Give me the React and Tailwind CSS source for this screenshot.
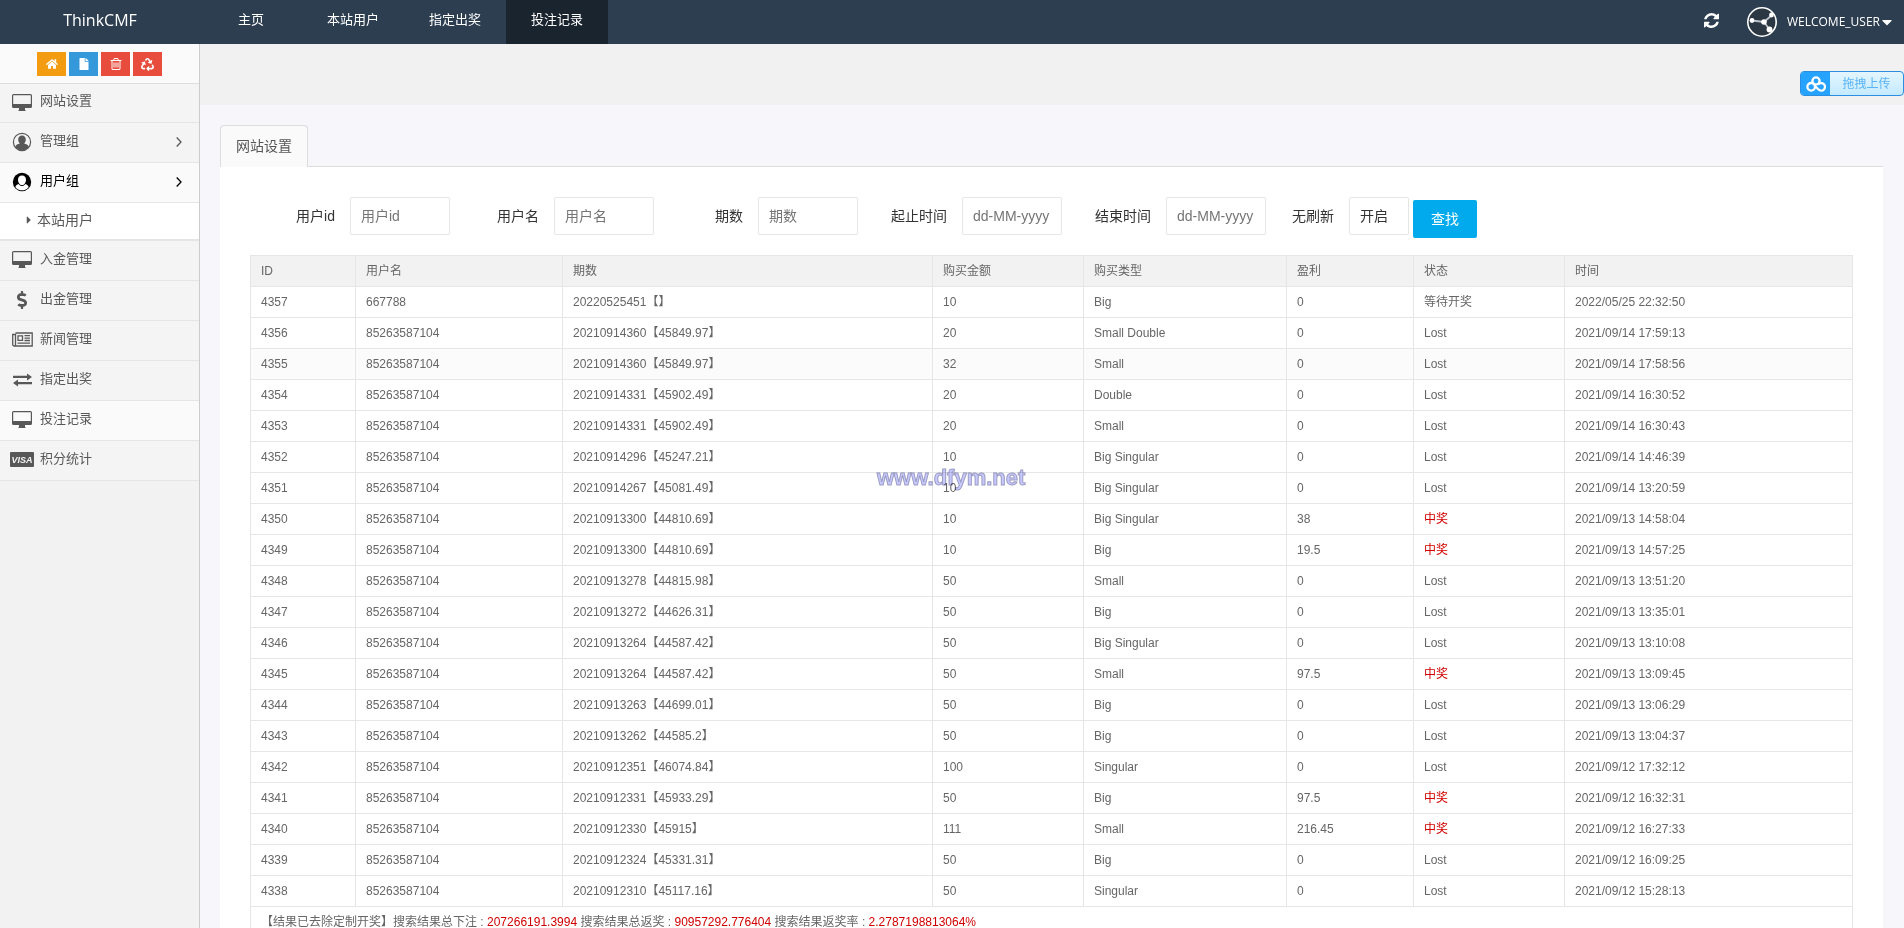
import { FaHome, FaFile, FaRecycle, FaDollarSign, FaCaretDown, FaCaretRight } from 'react-icons/fa';

const sans = "font-['Liberation_Sans','Noto_Sans_CJK_SC',sans-serif]";

const Monitor = () => (
  <svg viewBox="0 0 20 17" className="h-[17px] w-5" fill="currentColor">
    <path fillRule="evenodd" d="M1.500 0h17A1.500 1.500 0 0 1 20 1.500v11a1.500 1.500 0 0 1-1.500 1.500H13v2h.5v1h-7v-1H7v-2H1.500A1.500 1.500 0 0 1 0 12.500v-11A1.500 1.500 0 0 1 1.500 0ZM1.200 1.300V10h17.600V1.300Z" />
  </svg>
);

const AdminFace = () => (
  <svg viewBox="0 0 20 20" className="h-5 w-5">
    <circle cx="10" cy="10" r="8.600" fill="none" stroke="currentColor" strokeWidth="1.200" />
    <path fill="currentColor" d="M10 3.600c2.500 0 3.800 1.700 3.800 4 0 1.700-.7 3.200-1.700 4 2.300.3 3.900 1.500 4.700 3.400a8.300 8.300 0 0 1-13.600 0c.8-1.900 2.400-3.100 4.700-3.400-1-.8-1.700-2.300-1.700-4 0-2.300 1.300-4 3.800-4Z" />
  </svg>
);

const UserFace = () => (
  <svg viewBox="0 0 20 20" className="h-5 w-5">
    <circle cx="10" cy="10" r="9.200" fill="currentColor" />
    <path fill="#fff" d="M10 3.500c2.700 0 4 1.900 4 4.300 0 1.600-.6 3-1.500 3.900 2 .4 3.500 1.500 4.200 3.200a8.200 8.200 0 0 1-13.400 0c.7-1.700 2.200-2.800 4.200-3.200C6.600 10.800 6 9.400 6 7.800c0-2.400 1.300-4.300 4-4.300Z" />
    <path fill="none" stroke="currentColor" strokeWidth="1" d="M6.500 11.600c1 1.300 2.200 2 3.500 2s2.500-.7 3.500-2" />
  </svg>
);

const News = () => (
  <svg viewBox="0 0 21 15" className="h-[15px] w-[21px]" fill="none" stroke="currentColor" strokeWidth="1.300">
    <path d="M3.500 1h16.700v13H2.200A1.500 1.500 0 0 1 .7 12.500V2.500h2.800v10a1.300 1.300 0 0 1-1.300 1.500" />
    <path d="M6 3.800h4.500v4.500H6zM12.500 3.700h5.500M12.500 6.100h5.500M12.500 8.500h5.500M5.500 11.200h12.500" />
  </svg>
);

const Exchange = () => (
  <svg viewBox="0 0 19 14" className="h-3.5 w-[19px]" fill="currentColor">
    <path d="M0 2.700h14V.5l5 3.500-5 3.500V5H0ZM19 11.300H5v2.200L0 10l5-3.500V9h14Z" />
  </svg>
);

const Visa = () => (
  <svg viewBox="0 0 24 15" className="h-[15px] w-6 shrink-0">
    <rect width="24" height="15" rx="1" fill="currentColor" />
    <text x="12" y="11" textAnchor="middle" fontFamily="Liberation Sans" fontSize="9" fontWeight="bold" fontStyle="italic" fill="#f4f4f4">VISA</text>
  </svg>
);

const Trash = ({ className }) => (
  <svg viewBox="0 0 1408 1536" className={className} fill="currentColor">
    <path d="M512 608v576q0 14-9 23t-23 9h-64q-14 0-23-9t-9-23V608q0-14 9-23t23-9h64q14 0 23 9t9 23zm256 0v576q0 14-9 23t-23 9h-64q-14 0-23-9t-9-23V608q0-14 9-23t23-9h64q14 0 23 9t9 23zm256 0v576q0 14-9 23t-23 9h-64q-14 0-23-9t-9-23V608q0-14 9-23t23-9h64q14 0 23 9t9 23zm128 724V384H256v948q0 22 7 40.500t14.500 27 10.500 8.500h832q3 0 10.500-8.500t14.500-27 7-40.500zM480 256h448l-48-117q-7-9-17-11H546q-10 2-17 11zm928 32v64q0 14-9 23t-23 9h-96v948q0 83-47 143.500t-113 60.500H288q-66 0-113-58.500T128 1336V384H32q-14 0-23-9t-9-23v-64q0-14 9-23t23-9h309l70-167q15-37 54-63t79-26h320q40 0 79 26t54 63l70 167h309q14 0 23 9t9 23z" />
  </svg>
);

const Chevron = () => (
  <svg viewBox="0 0 6 10" className="h-2.5 w-1.5" fill="none" stroke="currentColor" strokeWidth="1.300">
    <path d="M.7.500 5 5 .7 9.500" />
  </svg>
);

const Dollar = () => <FaDollarSign className="h-[18px] w-[14px]" />;

const Refresh = () => (
  <svg viewBox="0 0 1536 1536" className="h-[15px] w-[15px]" fill="currentColor">
    <path d="M1511 928q0 5-1 7-64 268-268 434.500T764 1536q-146 0-282.500-55T238 1324l-129 129q-19 19-45 19t-45-19-19-45V960q0-26 19-45t45-19h448q26 0 45 19t19 45-19 45l-137 137q71 66 161 102t187 36q134 0 250-65t186-179q11-17 53-117 8-23 30-23h192q13 0 22.500 9.500t9.500 22.500zm25-800v448q0 26-19 45t-45 19h-448q-26 0-45-19t-19-45 19-45l138-138Q969 256 768 256q-134 0-250 65T332 500q-11 17-53 117-8 23-30 23H50q-13 0-22.500-9.500T18 608v-7q65-268 270-434.500T768 0q146 0 284 55.500T1297 212l130-129q19-19 45-19t45 19 19 45z" />
  </svg>
);

const Avatar = () => (
  <svg viewBox="0 0 30 30" className="h-[30px] w-[30px]">
    <circle cx="15" cy="15" r="14.200" fill="#2b3743" stroke="#fff" strokeWidth="1.600" />
    <path d="M5 13.500 17 15l8-7M17 15l5.500 7.500" fill="none" stroke="#bcc3c9" strokeWidth="1.800" />
    <g fill="#fff">
      <circle cx="5" cy="13.500" r="2.400" />
      <circle cx="17" cy="15" r="2.800" />
      <circle cx="24.500" cy="8" r="2.400" />
      <circle cx="22.500" cy="22.500" r="2.900" />
    </g>
  </svg>
);

const Cloud = () => (
  <svg viewBox="0 0 20 16" className="h-4 w-5" fill="none" stroke="#fff" strokeWidth="2.300">
    <circle cx="10" cy="5" r="3.600" />
    <circle cx="5.200" cy="10.800" r="3.800" />
    <path d="M12.200 8.500a3.800 3.800 0 1 1 .3 5L8.500 9.500" />
  </svg>
);

const nav = [
  { label: '主页' },
  { label: '本站用户' },
  { label: '指定出奖' },
  { label: '投注记录', active: true },
];

const tools = [
  { label: '首页', Icon: FaHome, color: 'bg-[#f39c12]', size: 'h-3 w-3' },
  { label: '文件', Icon: FaFile, color: 'bg-[#3498db]', size: 'h-3 w-3' },
  { label: '删除', Icon: Trash, color: 'bg-[#e74c3c]', size: 'h-3 w-3' },
  { label: '回收', Icon: FaRecycle, color: 'bg-[#e74c3c]', size: 'h-[13px] w-[13px]' },
];

const menu = [
  { label: '网站设置', Icon: Monitor },
  { label: '管理组', Icon: AdminFace, more: true },
  { label: '用户组', Icon: UserFace, more: true, open: true, sub: '本站用户' },
  { label: '入金管理', Icon: Monitor },
  { label: '出金管理', Icon: Dollar },
  { label: '新闻管理', Icon: News },
  { label: '指定出奖', Icon: Exchange },
  { label: '投注记录', Icon: Monitor, hover: true },
  { label: '积分统计', Icon: Visa },
];

const fields = [
  { id: 'uid', label: '用户id', hint: '用户id' },
  { id: 'uname', label: '用户名', hint: '用户名' },
  { id: 'issue', label: '期数', hint: '期数' },
  { id: 'start', label: '起止时间', hint: 'dd-MM-yyyy' },
  { id: 'end', label: '结束时间', hint: 'dd-MM-yyyy' },
];

const headers = ['ID', '用户名', '期数', '购买金额', '购买类型', '盈利', '状态', '时间'];

const U = '85263587104';
const rows = [
  ['4357', '667788', '20220525451【】', '10', 'Big', '0', '等待开奖', '2022/05/25 22:32:50'],
  ['4356', U, '20210914360【45849.97】', '20', 'Small Double', '0', 'Lost', '2021/09/14 17:59:13'],
  ['4355', U, '20210914360【45849.97】', '32', 'Small', '0', 'Lost', '2021/09/14 17:58:56'],
  ['4354', U, '20210914331【45902.49】', '20', 'Double', '0', 'Lost', '2021/09/14 16:30:52'],
  ['4353', U, '20210914331【45902.49】', '20', 'Small', '0', 'Lost', '2021/09/14 16:30:43'],
  ['4352', U, '20210914296【45247.21】', '10', 'Big Singular', '0', 'Lost', '2021/09/14 14:46:39'],
  ['4351', U, '20210914267【45081.49】', '10', 'Big Singular', '0', 'Lost', '2021/09/14 13:20:59'],
  ['4350', U, '20210913300【44810.69】', '10', 'Big Singular', '38', '中奖', '2021/09/13 14:58:04'],
  ['4349', U, '20210913300【44810.69】', '10', 'Big', '19.5', '中奖', '2021/09/13 14:57:25'],
  ['4348', U, '20210913278【44815.98】', '50', 'Small', '0', 'Lost', '2021/09/13 13:51:20'],
  ['4347', U, '20210913272【44626.31】', '50', 'Big', '0', 'Lost', '2021/09/13 13:35:01'],
  ['4346', U, '20210913264【44587.42】', '50', 'Big Singular', '0', 'Lost', '2021/09/13 13:10:08'],
  ['4345', U, '20210913264【44587.42】', '50', 'Small', '97.5', '中奖', '2021/09/13 13:09:45'],
  ['4344', U, '20210913263【44699.01】', '50', 'Big', '0', 'Lost', '2021/09/13 13:06:29'],
  ['4343', U, '20210913262【44585.2】', '50', 'Big', '0', 'Lost', '2021/09/13 13:04:37'],
  ['4342', U, '20210912351【46074.84】', '100', 'Singular', '0', 'Lost', '2021/09/12 17:32:12'],
  ['4341', U, '20210912331【45933.29】', '50', 'Big', '97.5', '中奖', '2021/09/12 16:32:31'],
  ['4340', U, '20210912330【45915】', '111', 'Small', '216.45', '中奖', '2021/09/12 16:27:33'],
  ['4339', U, '20210912324【45331.31】', '50', 'Big', '0', 'Lost', '2021/09/12 16:09:25'],
  ['4338', U, '20210912310【45117.16】', '50', 'Singular', '0', 'Lost', '2021/09/12 15:28:13'],
];

function Header() {
  return (
    <header className="flex h-11 shrink-0 items-stretch bg-[#2c3e50] font-['Open_Sans','Noto_Sans_CJK_SC',sans-serif] text-white">
      <a href="#" className="flex w-[200px] items-center justify-center pb-1 text-base">ThinkCMF</a>
      <nav className="flex">
        {nav.map((n) => (
          <a key={n.label} href="#" className={`flex w-[102px] items-center justify-center pb-1 text-[13px] ${n.active ? 'bg-[#1a242f]' : ''}`}>
            {n.label}
          </a>
        ))}
      </nav>
      <div className="ml-auto flex items-center pr-3">
        <button type="button" aria-label="刷新" className="mr-7 pb-1"><Refresh /></button>
        <button type="button" className="flex items-center text-xs">
          <Avatar />
          <span className="ml-2.5">WELCOME_USER</span>
          <FaCaretDown className="ml-0.5 h-4 w-2.5" />
        </button>
      </div>
    </header>
  );
}

function Sidebar() {
  return (
    <aside className="w-[200px] shrink-0 border-r border-[#ccc] bg-[#f2f2f2] text-[13px] text-[#585858]">
      <div className="flex h-10 justify-center gap-[3px] border-b border-[#ddd] bg-[#fafafa] pt-2">
        {tools.map(({ label, Icon, color, size }) => (
          <button key={label} type="button" aria-label={label} className={`flex h-6 w-[29px] items-center justify-center text-white ${color}`}>
            <Icon className={size} />
          </button>
        ))}
      </div>
      <ul>
        {menu.map(({ label, Icon, more, open, hover, sub }, i) => (
          <li key={label}>
            <a href="#" className={`flex items-center border-b border-[#e5e5e5] pr-3.5 pb-0.5 pl-2.5 ${i === 0 ? 'h-[39px]' : 'h-10'} ${open || hover ? 'bg-[#fafafa]' : 'bg-[#f4f4f4]'} ${open ? 'text-black' : ''}`}>
              <span className="flex w-6 shrink-0 justify-center"><Icon /></span>
              <span className="ml-1.5 pb-0.5">{label}</span>
              {more && <span className="ml-auto pr-[3px]"><Chevron /></span>}
            </a>
            {sub && (
              <a href="#" className="flex h-[38px] items-center border-b-2 border-[#e5e5e5] bg-white pb-0.5 pl-[25px] text-sm">
                <FaCaretRight className="h-3 w-2" />
                <span className="ml-1">{sub}</span>
              </a>
            )}
          </li>
        ))}
      </ul>
    </aside>
  );
}

function SearchForm() {
  return (
    <form className="flex items-start gap-1 pb-[17px] text-sm text-[#333]" onSubmit={(e) => e.preventDefault()}>
      {fields.map((f) => (
        <div key={f.id} className="flex items-center">
          <label htmlFor={f.id} className="w-[100px] pr-[15px] text-right">{f.label}</label>
          <input id={f.id} type="text" placeholder={f.hint} className="h-[38px] w-[100px] rounded-xs border border-[#e6e6e6] bg-white pl-2.5 placeholder:text-[#757575]" />
        </div>
      ))}
      <div className="flex items-center">
        <label htmlFor="auto" className="w-[79px] pr-[15px] text-right">无刷新</label>
        <select id="auto" className="h-[38px] w-[60px] appearance-none rounded-xs border border-[#e6e6e6] bg-white pl-2.5">
          <option>开启</option>
        </select>
      </div>
      <button type="submit" className="mt-[3px] h-[38px] w-16 rounded-xs bg-[#01aaed] text-sm text-white">查找</button>
    </form>
  );
}

function Records() {
  const cell = 'border border-[#e6e6e6] px-2.5';
  return (
    <table className="w-full table-fixed border-collapse text-left text-xs text-[#666]">
      <colgroup>
        <col className="w-[105px]" />
        <col className="w-[207px]" />
        <col className="w-[370px]" />
        <col className="w-[151px]" />
        <col className="w-[203px]" />
        <col className="w-[127px]" />
        <col className="w-[151px]" />
        <col className="w-[288px]" />
      </colgroup>
      <thead>
        <tr className="h-[31px] bg-[#f2f2f2]">
          {headers.map((h) => <th key={h} className={`${cell} font-normal`}>{h}</th>)}
        </tr>
      </thead>
      <tbody>
        {rows.map((r) => (
          <tr key={r[0]} className={`h-[31px] ${r[0] === '4355' ? 'bg-[#fbfbfb]' : ''}`}>
            {r.map((c, i) => (
              <td key={i} className={`${cell} ${c === '中奖' ? 'text-[#d00000]' : ''}`}>{c}</td>
            ))}
          </tr>
        ))}
        <tr className="h-[31px]">
          <td colSpan={8} className={cell}>
            【结果已去除定制开奖】搜索结果总下注 : <span className="text-[#d00000]">207266191.3994</span> 搜索结果总返奖 : <span className="text-[#d00000]">90957292.776404</span> 搜索结果返奖率 : <span className="text-[#d00000]">2.2787198813064%</span>
          </td>
        </tr>
      </tbody>
    </table>
  );
}

export default function App() {
  return (
    <div className={`relative flex h-screen flex-col overflow-hidden bg-white ${sans}`}>
      <Header />
      <div className="flex min-h-0 flex-1">
        <Sidebar />
        <div className="flex min-w-0 flex-1 flex-col bg-[#f6f6fb]">
          <div className="h-[61px] shrink-0 bg-[#f1f1f1]" />
          <main className="min-h-0 flex-1 overflow-hidden pt-5 pr-[21px] pl-5">
            <div className="flex border-b border-[#ddd]">
              <a href="#" className="-mb-px flex h-[42px] items-center rounded-t border border-b-0 border-[#ddd] bg-[#fafafa] px-[15px] pb-0.5 text-sm text-[#555]">网站设置</a>
            </div>
            <section className="bg-white px-[30px] pt-[30px] pb-8">
              <SearchForm />
              <Records />
            </section>
          </main>
        </div>
      </div>
      <button type="button" className="absolute top-[71px] right-0 flex h-[25px] w-[104px] items-stretch overflow-hidden rounded border border-[#2c8ee0] bg-linear-to-b from-[#e4f6ff] to-[#c4eaff] text-xs text-[#5ab4f5]">
        <span className="flex w-[29px] items-center justify-center bg-[#26a2ff]"><Cloud /></span>
        <span className="flex flex-1 items-center justify-center">拖拽上传</span>
      </button>
      <div className="pointer-events-none absolute top-[464px] left-[877px] text-[22px] leading-7 font-bold text-[#c8caff] mix-blend-multiply [-webkit-text-stroke:1px_#9c9cc4]">www.dfym.net</div>
    </div>
  );
}
